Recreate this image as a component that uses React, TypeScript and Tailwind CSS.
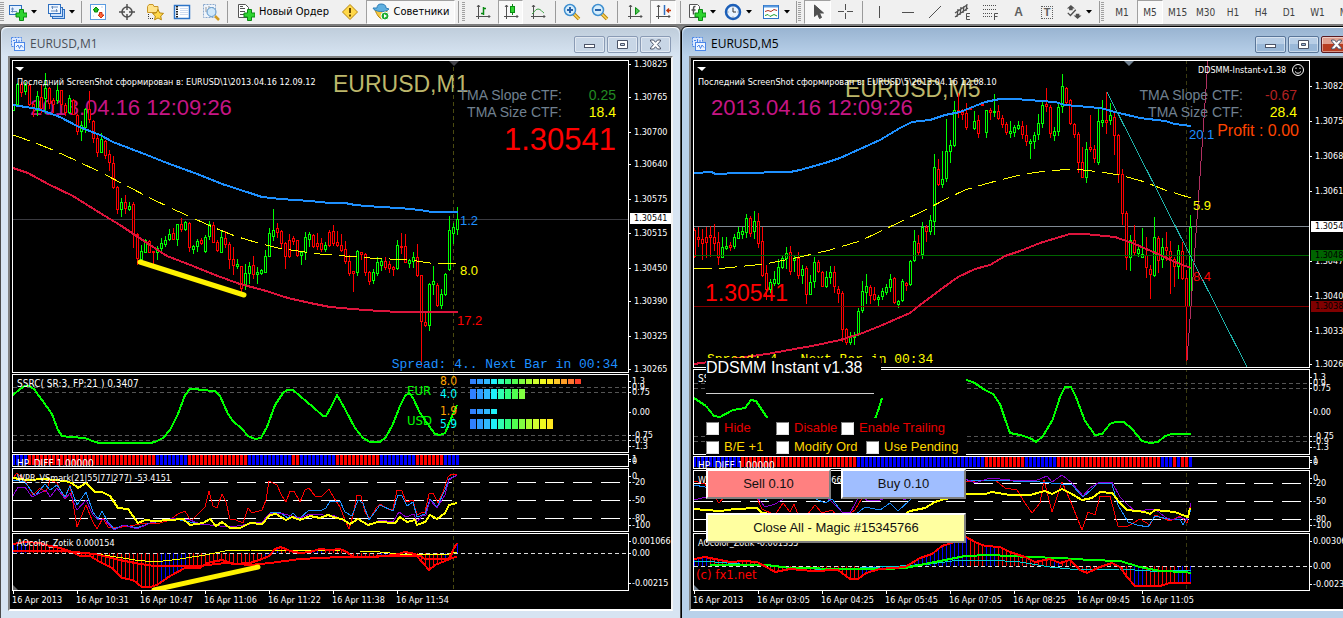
import type { ReactNode } from 'react';
import clsx from 'clsx';

type Candle = [high: number, top: number, bottom: number, low: number, up: 0 | 1];
type Point = [number, number];
type Run = [color: string, count: number];
type AxisLabel = { y: number; text: string; box?: string; fill?: string };

const UI_FONT = "[font-family:'DejaVu_Sans_Condensed','DejaVu_Sans',sans-serif]";
const TITLE_FONT = "[font-family:'Open_Sans','Noto_Sans',sans-serif]";
const ARIAL = "[font-family:'Liberation_Sans',Arial,sans-serif]";
const MONO = "[font-family:'Liberation_Mono','Courier_New',monospace]";

const LIME = '#00ff00';
const RED = '#ff0000';
const BLUE = '#0000ff';
const DODGER = '#1e90ff';
const CRIMSON = '#dc143c';
const YELLOW = '#ffff00';
const PURPLE = '#8a00d0';

/* ---------- Market data ---------- */

const M1_CANDLES: Candle[] = [
  [104, 104, 110, 110, 1], [83, 84, 104, 104, 1], [82, 84, 92, 96, 0], [82, 85, 91, 94, 1], [83, 85, 104, 105, 0],
  [103, 104, 108, 116, 0], [91, 96, 110, 115, 1], [85, 97, 108, 112, 0], [73, 88, 98, 113, 1], [87, 88, 103, 108, 0],
  [98, 100, 104, 112, 0], [84, 90, 100, 103, 1], [90, 90, 104, 105, 0], [103, 105, 112, 115, 0], [95, 98, 112, 113, 1],
  [99, 100, 114, 114, 0], [114, 115, 131, 134, 0], [121, 125, 131, 140, 1], [108, 109, 127, 132, 1], [91, 109, 119, 122, 0],
  [120, 121, 138, 142, 0], [133, 138, 152, 156, 0], [133, 139, 152, 152, 1], [140, 141, 155, 158, 0], [150, 154, 162, 170, 0],
  [156, 163, 187, 188, 0], [186, 187, 209, 213, 0], [198, 202, 209, 216, 1], [195, 202, 208, 213, 0], [202, 206, 209, 210, 1],
  [202, 204, 233, 247, 0], [233, 234, 258, 264, 0], [245, 251, 259, 260, 1], [239, 240, 252, 252, 1], [240, 241, 252, 252, 0],
  [251, 251, 252, 264, 0], [246, 248, 252, 259, 1], [238, 243, 248, 250, 1], [236, 240, 244, 246, 1], [229, 234, 239, 240, 1],
  [228, 233, 239, 239, 0], [224, 224, 239, 245, 1], [218, 224, 229, 231, 0], [221, 222, 229, 230, 1], [222, 223, 247, 251, 0],
  [245, 246, 249, 253, 1], [239, 241, 246, 251, 1], [238, 240, 243, 244, 0], [235, 237, 251, 252, 1], [221, 224, 236, 239, 1],
  [222, 225, 242, 242, 0], [240, 242, 250, 251, 0], [231, 237, 252, 252, 1], [231, 238, 244, 247, 0], [242, 244, 259, 268, 0],
  [247, 259, 265, 274, 0], [259, 264, 266, 268, 1], [266, 266, 288, 295, 0], [264, 273, 285, 289, 1], [262, 266, 273, 283, 1],
  [256, 265, 274, 278, 0], [267, 272, 274, 283, 1], [269, 270, 273, 274, 1], [250, 256, 272, 272, 1], [228, 233, 256, 256, 1],
  [209, 230, 236, 240, 1], [223, 228, 232, 237, 0], [230, 231, 243, 247, 0], [242, 243, 256, 268, 0], [234, 240, 256, 257, 0],
  [236, 238, 241, 244, 0], [240, 240, 255, 256, 0], [251, 252, 255, 264, 1], [232, 237, 252, 259, 1], [232, 234, 239, 246, 1],
  [234, 235, 246, 247, 0], [233, 243, 246, 249, 0], [238, 243, 249, 251, 0], [242, 245, 249, 251, 1], [230, 232, 245, 246, 0],
  [225, 231, 243, 245, 0], [231, 242, 245, 246, 0], [234, 245, 250, 251, 0], [241, 249, 261, 263, 0], [255, 261, 273, 275, 0],
  [271, 271, 273, 291, 0], [250, 251, 272, 275, 1], [252, 252, 254, 259, 0], [253, 254, 272, 275, 0], [271, 272, 281, 284, 0],
  [269, 272, 280, 283, 1], [257, 262, 273, 275, 1], [259, 261, 265, 270, 1], [257, 261, 267, 269, 0], [261, 264, 268, 272, 0],
  [266, 267, 269, 275, 0], [240, 245, 268, 269, 1], [233, 246, 247, 253, 0], [234, 246, 262, 262, 0], [259, 260, 263, 267, 1],
  [252, 257, 261, 267, 1], [244, 257, 275, 276, 0], [275, 275, 321, 365, 0], [312, 322, 325, 326, 0], [283, 284, 325, 330, 1],
  [266, 281, 284, 294, 1], [283, 285, 305, 306, 0], [289, 294, 305, 308, 1], [273, 274, 294, 295, 1], [216, 230, 269, 270, 1],
  [223, 227, 233, 243, 1], [207, 219, 229, 234, 1],
];

const M5_CANDLES: Candle[] = [
  [228, 230, 256, 257, 0], [227, 237, 239, 246, 0], [229, 239, 243, 259, 0], [227, 237, 242, 257, 0], [226, 235, 237, 256, 0],
  [224, 237, 243, 250, 0], [232, 242, 257, 264, 0], [237, 247, 257, 257, 1], [237, 246, 248, 249, 1], [242, 245, 247, 250, 0],
  [234, 237, 246, 248, 1], [227, 232, 238, 238, 1], [227, 231, 234, 238, 1], [214, 218, 232, 237, 1], [216, 218, 233, 236, 0],
  [211, 221, 231, 238, 1], [213, 221, 243, 247, 0], [227, 241, 275, 276, 0], [265, 273, 289, 299, 0], [279, 282, 289, 292, 1],
  [271, 279, 283, 285, 1], [259, 267, 283, 284, 1], [256, 258, 267, 268, 1], [247, 253, 258, 268, 1], [246, 252, 271, 274, 0],
  [255, 258, 260, 271, 1], [252, 258, 275, 278, 0], [265, 269, 275, 283, 1], [266, 268, 294, 303, 0], [275, 282, 294, 294, 1],
  [257, 262, 281, 287, 1], [260, 262, 271, 272, 0], [271, 272, 286, 286, 0], [271, 277, 286, 287, 1], [266, 272, 277, 283, 1],
  [266, 272, 286, 292, 0], [286, 289, 293, 302, 0], [291, 293, 329, 341, 0], [328, 329, 342, 344, 0], [332, 337, 342, 344, 1],
  [332, 335, 337, 344, 1], [308, 311, 334, 335, 1], [281, 291, 310, 312, 1], [274, 286, 292, 303, 1], [285, 287, 295, 303, 0],
  [287, 294, 299, 300, 0], [295, 297, 299, 306, 1], [288, 291, 296, 299, 1], [284, 287, 292, 294, 1], [274, 279, 287, 291, 1],
  [277, 278, 302, 303, 0], [300, 301, 304, 307, 1], [279, 281, 300, 301, 1], [282, 283, 285, 290, 0], [260, 261, 284, 285, 1],
  [230, 241, 260, 261, 1], [235, 243, 252, 254, 0], [222, 227, 254, 258, 1], [225, 227, 231, 241, 0], [215, 220, 231, 234, 1],
  [154, 167, 221, 234, 1], [159, 169, 184, 185, 0], [151, 179, 184, 187, 1], [119, 151, 178, 181, 1], [140, 145, 151, 162, 1],
  [101, 110, 145, 146, 1], [93, 110, 112, 117, 0], [109, 112, 114, 119, 0], [103, 113, 127, 129, 0], [108, 108, 109, 109, 0],
  [111, 121, 128, 129, 1], [115, 120, 133, 137, 0], [104, 104, 105, 105, 0], [110, 110, 132, 137, 1], [108, 110, 112, 119, 0],
  [94, 111, 112, 116, 1], [105, 111, 118, 119, 0], [115, 118, 124, 127, 0], [122, 124, 132, 134, 0], [121, 131, 133, 137, 1],
  [125, 127, 132, 136, 1], [121, 125, 128, 129, 1], [121, 126, 134, 138, 0], [125, 135, 141, 145, 0], [139, 141, 143, 158, 1],
  [132, 135, 141, 148, 1], [114, 123, 134, 139, 1], [100, 105, 123, 127, 1], [88, 104, 106, 111, 0], [105, 107, 133, 137, 0],
  [127, 131, 135, 140, 1], [102, 107, 131, 135, 1], [74, 86, 106, 112, 1], [87, 88, 102, 103, 0], [99, 100, 123, 124, 0],
  [123, 124, 134, 137, 0], [132, 134, 162, 172, 0], [147, 162, 177, 177, 0], [142, 149, 177, 182, 1], [115, 147, 149, 151, 0],
  [145, 149, 158, 162, 0], [107, 121, 162, 164, 1], [100, 120, 122, 126, 1], [92, 120, 122, 133, 0], [103, 115, 120, 124, 1],
  [112, 117, 135, 154, 0], [134, 135, 174, 182, 0], [169, 174, 213, 224, 0], [211, 213, 257, 269, 0], [235, 240, 257, 270, 1],
  [225, 240, 252, 254, 0], [247, 249, 253, 256, 1], [228, 254, 257, 257, 1], [237, 255, 267, 277, 0], [265, 269, 274, 298, 0],
  [217, 237, 275, 276, 1], [236, 238, 260, 272, 0], [238, 247, 259, 267, 1], [232, 247, 250, 260, 0], [241, 251, 257, 293, 0],
  [257, 259, 266, 286, 0], [245, 250, 266, 278, 1], [242, 251, 278, 279, 0], [270, 278, 306, 360, 0], [215, 227, 306, 306, 1],
];

const M1_UPPER: Point[] = [[13, 105], [38, 109], [60, 117], [77, 126], [100, 135], [113, 142], [147, 155], [167, 163], [200, 175], [222, 184], [250, 193], [262, 197], [280, 199], [310, 201], [330, 203], [345, 203], [355, 205], [380, 207], [400, 208], [420, 210], [432, 212], [458, 212]];
const M1_MIDDLE: Point[] = [[13, 135], [33, 142], [53, 150], [77, 161], [100, 172], [127, 186], [150, 198], [173, 209], [195, 219], [215, 228], [235, 236], [258, 243], [278, 248], [298, 251], [320, 254], [345, 256], [370, 258], [390, 259], [410, 260], [430, 263], [458, 263]];
const M1_LOWER: Point[] = [[13, 168], [28, 173], [48, 184], [73, 196], [100, 213], [120, 225], [147, 243], [167, 256], [193, 266], [215, 275], [240, 284], [263, 290], [288, 298], [310, 303], [330, 307], [352, 309], [380, 311], [400, 312], [458, 312]];

const M5_UPPER: Point[] = [[694, 173], [712, 172], [715, 174], [740, 173], [790, 172], [800, 170], [825, 163], [840, 158], [860, 149], [880, 140], [900, 128], [912, 122], [930, 120], [945, 115], [960, 112], [970, 108], [985, 102], [1000, 99], [1015, 99], [1055, 102], [1065, 105], [1100, 108], [1115, 112], [1140, 118], [1165, 121], [1175, 124], [1191, 126]];
const M5_MIDDLE: Point[] = [[694, 269], [725, 268], [765, 264], [800, 257], [830, 250], [860, 241], [900, 222], [925, 210], [950, 197], [965, 190], [985, 184], [1000, 180], [1020, 175], [1045, 171], [1075, 169], [1100, 172], [1120, 175], [1145, 182], [1165, 190], [1191, 198]];
const M5_LOWER: Point[] = [[694, 364], [730, 359], [767, 354], [800, 348], [812, 346], [840, 340], [860, 334], [880, 326], [910, 313], [920, 305], [940, 290], [958, 277], [975, 269], [990, 265], [1005, 256], [1020, 251], [1040, 243], [1070, 234], [1085, 234], [1115, 237], [1135, 244], [1160, 255], [1175, 262], [1191, 268]];

const M1_SSRC: Point[] = [[13, 395], [20, 389], [25, 386], [29, 386], [34, 389], [42, 400], [52, 414], [58, 430], [62, 436], [70, 437], [85, 438], [95, 442], [100, 443], [150, 443], [155, 442], [163, 438], [170, 430], [178, 414], [185, 395], [190, 389], [197, 389], [200, 390], [215, 391], [220, 396], [228, 414], [233, 421], [242, 429], [248, 436], [255, 439], [261, 438], [267, 427], [275, 405], [283, 393], [287, 390], [293, 390], [300, 396], [313, 407], [323, 416], [326, 416], [331, 407], [337, 395], [345, 409], [355, 428], [363, 438], [370, 442], [380, 442], [386, 437], [393, 424], [400, 406], [405, 396], [409, 393], [413, 398], [420, 413], [427, 423], [435, 434], [440, 435], [445, 433], [450, 421], [457, 405]];
const M5_SSRC: Point[] = [[966, 380], [973, 382], [985, 390], [993, 394], [1000, 404], [1005, 419], [1010, 433], [1020, 435], [1030, 438], [1036, 442], [1043, 436], [1053, 419], [1060, 397], [1065, 387], [1071, 387], [1076, 397], [1085, 421], [1095, 435], [1102, 434], [1110, 424], [1115, 422], [1124, 422], [1132, 429], [1142, 441], [1150, 443], [1158, 442], [1165, 436], [1172, 434], [1191, 434]];

const M1_WPR_YELLOW: Point[] = [[13, 478], [20, 479], [28, 480], [45, 479], [65, 481], [72, 483], [78, 488], [86, 483], [95, 492], [102, 492], [110, 496], [118, 508], [128, 509], [138, 523], [145, 520], [155, 521], [170, 520], [183, 519], [190, 525], [203, 523], [210, 519], [216, 526], [222, 522], [230, 528], [240, 528], [250, 523], [262, 524], [270, 515], [276, 514], [286, 520], [292, 517], [300, 520], [310, 516], [320, 518], [328, 515], [336, 518], [342, 519], [350, 524], [358, 519], [368, 525], [378, 522], [395, 523], [400, 517], [407, 522], [415, 520], [417, 525], [425, 522], [430, 515], [437, 519], [445, 513], [449, 505], [457, 503]];
const M1_WPR_RED: Point[] = [[13, 478], [17, 473], [25, 480], [33, 495], [40, 488], [46, 492], [50, 480], [57, 483], [65, 499], [70, 485], [77, 527], [86, 505], [92, 520], [97, 529], [103, 518], [108, 527], [114, 528], [130, 526], [145, 523], [160, 523], [170, 520], [178, 514], [185, 511], [191, 521], [200, 512], [205, 507], [209, 491], [213, 506], [217, 508], [222, 494], [226, 502], [230, 519], [236, 520], [243, 523], [248, 508], [252, 513], [262, 510], [266, 500], [269, 481], [277, 485], [282, 496], [286, 502], [290, 491], [294, 491], [300, 502], [305, 490], [309, 488], [315, 496], [322, 496], [329, 489], [334, 498], [340, 507], [345, 520], [349, 529], [353, 515], [357, 495], [361, 496], [365, 512], [370, 519], [376, 508], [380, 504], [388, 509], [393, 509], [397, 490], [402, 491], [406, 502], [413, 500], [417, 515], [421, 513], [425, 512], [429, 494], [433, 493], [438, 503], [443, 492], [448, 477], [452, 474], [457, 474]];
const M1_WPR_BLUE: Point[] = [[13, 480], [25, 482], [35, 496], [45, 484], [50, 490], [57, 485], [65, 497], [70, 486], [77, 505], [86, 492], [93, 512], [98, 519], [102, 511], [108, 522], [114, 529], [124, 525], [137, 528], [150, 523], [175, 519], [200, 524], [230, 527], [250, 524], [262, 523], [270, 513], [279, 512], [288, 518], [293, 513], [299, 519], [309, 510], [320, 511], [326, 508], [330, 501], [340, 501], [345, 512], [352, 516], [358, 500], [363, 503], [369, 520], [380, 505], [393, 511], [398, 495], [402, 496], [407, 506], [413, 502], [417, 517], [425, 514], [430, 499], [437, 507], [445, 490], [449, 479], [457, 475]];
const M1_WPR_PURPLE: Point[] = [[13, 496], [18, 487], [25, 487], [32, 497], [40, 493], [46, 490], [50, 497], [57, 488], [65, 499], [70, 493], [77, 510], [86, 500], [93, 515], [98, 520], [104, 519], [114, 530], [124, 525], [137, 529], [150, 523], [175, 518], [190, 520], [200, 524], [230, 527], [250, 524], [262, 522], [270, 513], [280, 513], [300, 518], [310, 514], [335, 516], [350, 524], [358, 519], [370, 525], [380, 520], [393, 522], [399, 512], [406, 517], [414, 514], [417, 522], [422, 516], [426, 515], [430, 500], [437, 508], [445, 495], [449, 480], [457, 475]];

const M5_WPR_YELLOW: Point[] = [[694, 509], [705, 510], [720, 511], [735, 509], [757, 508], [762, 513], [830, 520], [905, 514], [910, 511], [925, 508], [935, 502], [945, 499], [955, 497], [966, 494], [985, 494], [992, 492], [1010, 495], [1030, 495], [1045, 491], [1052, 494], [1062, 489], [1070, 493], [1082, 500], [1092, 498], [1100, 492], [1112, 493], [1120, 503], [1127, 510], [1145, 512], [1150, 514], [1155, 510], [1175, 512], [1185, 516], [1188, 517], [1190, 508]];
const M5_WPR_PURPLE: Point[] = [[694, 500], [706, 497], [720, 490], [735, 492], [757, 497], [765, 507], [775, 504], [790, 495], [800, 499], [815, 493], [830, 500], [842, 512], [850, 513], [860, 495], [868, 501], [880, 500], [895, 494], [905, 500], [912, 485], [925, 478], [966, 479], [975, 483], [990, 478], [1010, 480], [1035, 481], [1047, 476], [1052, 482], [1062, 475], [1072, 483], [1083, 496], [1090, 488], [1098, 483], [1112, 482], [1120, 497], [1128, 505], [1135, 511], [1155, 509], [1165, 517], [1172, 520], [1180, 517], [1187, 520], [1191, 503]];
const M5_WPR_RED: Point[] = [[694, 481], [705, 484], [719, 503], [730, 490], [757, 498], [762, 509], [775, 515], [783, 503], [790, 512], [794, 504], [800, 520], [807, 515], [815, 505], [822, 513], [832, 510], [840, 520], [855, 510], [862, 498], [880, 495], [905, 490], [930, 480], [966, 482], [985, 480], [995, 480], [1005, 488], [1017, 490], [1025, 503], [1032, 513], [1040, 503], [1044, 480], [1052, 512], [1062, 482], [1070, 500], [1082, 530], [1088, 512], [1095, 515], [1100, 496], [1110, 496], [1118, 526], [1128, 526], [1140, 519], [1150, 525], [1155, 515], [1170, 521], [1180, 516], [1187, 523], [1191, 503]];
const M5_WPR_BLUE: Point[] = [[694, 485], [705, 487], [760, 490], [766, 500], [780, 488], [800, 492], [825, 503], [832, 499], [842, 512], [855, 515], [865, 507], [880, 510], [890, 503], [898, 511], [910, 500], [930, 483], [985, 480], [1040, 482], [1072, 485], [1083, 497], [1092, 489], [1098, 483], [1112, 484], [1118, 505], [1128, 522], [1137, 525], [1148, 527], [1155, 516], [1172, 520], [1180, 519], [1183, 525], [1191, 510]];

const M1_AO: Point[] = [[13, 544], [25, 542], [40, 543], [50, 546], [60, 548], [70, 551], [80, 556], [90, 556], [100, 562], [112, 568], [122, 578], [133, 580], [142, 587], [150, 587], [157, 585], [170, 576], [185, 568], [200, 568], [207, 563], [222, 560], [235, 564], [250, 563], [262, 559], [269, 556], [275, 549], [281, 547], [290, 551], [300, 553], [310, 552], [320, 549], [330, 550], [340, 549], [347, 552], [353, 557], [370, 557], [395, 555], [405, 552], [415, 554], [423, 563], [429, 570], [435, 565], [450, 559], [453, 550], [457, 543]];
const M1_AO_SLOW: Point[] = [[13, 551], [45, 551], [60, 551], [75, 552], [95, 554], [115, 559], [140, 564], [155, 566], [200, 566], [225, 563], [250, 565], [270, 563], [300, 559], [340, 557], [420, 556], [425, 559], [445, 559], [457, 557]];
const M1_AO_YELLOW: Point[] = [[13, 550], [60, 551], [90, 553], [110, 556], [135, 560], [155, 562], [180, 559], [205, 555], [225, 551], [250, 550], [340, 551], [360, 551], [380, 552], [400, 554], [425, 554], [445, 555], [457, 552]];
const M5_AO: Point[] = [[694, 559], [705, 557], [715, 559], [730, 562], [745, 561], [757, 562], [768, 568], [775, 572], [790, 569], [812, 571], [838, 570], [850, 579], [858, 579], [866, 573], [880, 569], [905, 567], [912, 563], [920, 558], [932, 554], [942, 546], [952, 543], [966, 537], [975, 542], [985, 546], [1000, 547], [1010, 552], [1025, 557], [1035, 562], [1050, 559], [1060, 563], [1070, 560], [1080, 570], [1087, 573], [1100, 567], [1112, 563], [1120, 567], [1127, 577], [1135, 586], [1160, 586], [1170, 583], [1191, 583]];
const M5_AO_GREEN: Point[] = [[710, 565], [767, 565], [790, 568], [850, 569], [885, 569], [905, 568], [925, 564], [945, 560], [965, 556], [990, 555], [1030, 557], [1060, 558], [1090, 560], [1120, 561], [1140, 567], [1160, 571], [1185, 572], [1191, 573]];
const M5_AO_CYAN: Point[] = [[694, 561], [715, 562], [740, 564], [770, 566], [830, 570], [860, 568], [900, 566], [930, 564], [960, 560], [990, 560], [1020, 562], [1050, 567], [1080, 570], [1120, 569], [1150, 571], [1170, 571], [1191, 570]];

const M1_RUNS: Run[] = [[BLUE, 4], [RED, 32], [BLUE, 8], [RED, 15], [BLUE, 11], [RED, 2], [BLUE, 9], [RED, 11], [BLUE, 9], [RED, 7], [BLUE, 4]];
const M5_RUNS: Run[] = [[BLUE, 12], [RED, 29], [BLUE, 32], [RED, 10], [BLUE, 8], [RED, 26], [BLUE, 3], [RED, 1], [BLUE, 1], [RED, 2], [BLUE, 1]];
const M1_AO_RUNS: Run[] = [[BLUE, 4], [RED, 33], [BLUE, 7], [RED, 19], [BLUE, 4], [RED, 6], [BLUE, 5], [RED, 14], [BLUE, 4], [RED, 10], [RED, 2], [BLUE, 1], [RED, 2], [BLUE, 1]];
const M5_AO_RUNS: Run[] = [[BLUE, 4], [RED, 4], [BLUE, 4], [RED, 30], [BLUE, 27], [RED, 4], [BLUE, 3], [RED, 14], [BLUE, 2], [RED, 18], [BLUE, 3], [RED, 8], [BLUE, 2], [RED, 1], [BLUE, 1]];

const STRENGTH_COLORS = ['#3080ff', '#309cff', '#30b8ff', '#20f0f8', '#30ffb0', '#30ff80', '#50ff50', '#80ff40', '#a8ff30', '#d0ff30', '#f0f820', '#ffe820', '#ffc828', '#ffa028', '#ff7830', '#ff4028'];

const M1_TIMES = ['16 Apr 2013', '16 Apr 10:31', '16 Apr 10:47', '16 Apr 11:06', '16 Apr 11:22', '16 Apr 11:38', '16 Apr 11:54'];
const M5_TIMES = ['16 Apr 2013', '16 Apr 03:05', '16 Apr 04:25', '16 Apr 05:45', '16 Apr 07:05', '16 Apr 08:25', '16 Apr 09:45', '16 Apr 11:05'];

/* ---------- Chart primitives ---------- */

function valueAt(points: Point[], x: number) {
  const next = points.findIndex(([px]) => px >= x);
  if (next === -1) return points[points.length - 1][1];
  if (next === 0) return points[0][1];
  const [x0, y0] = points[next - 1];
  const [x1, y1] = points[next];
  return Math.round(y0 + ((y1 - y0) * (x - x0)) / (x1 - x0));
}

function Line({ points, color, width = 1, dash }: { points: Point[]; color: string; width?: number; dash?: string }) {
  return (
    <polyline
      points={points.map((p) => p.join(',')).join(' ')}
      fill="none"
      stroke={color}
      strokeWidth={width}
      strokeDasharray={dash}
      strokeLinejoin="round"
      shapeRendering="crispEdges"
    />
  );
}

function Level({ y, from, to, color, dash }: { y: number; from: number; to: number; color: string; dash?: string }) {
  return <path d={`M${from} ${y + 0.5}H${to}`} stroke={color} strokeDasharray={dash} shapeRendering="crispEdges" />;
}

function Cursor({ x, color = '#4a4a10' }: { x: number; color?: string }) {
  return <path d={`M${x + 0.5} 60V592`} stroke={color} strokeDasharray="4 3" shapeRendering="crispEdges" />;
}

function Candles({ data, x0 }: { data: Candle[]; x0: number }) {
  return (
    <g shapeRendering="crispEdges">
      {data.map(([high, top, bottom, low, up], i) => {
        const x = x0 + i * 4;
        const color = up ? LIME : RED;
        return (
          <g key={i}>
            <rect x={x} y={high} width={1} height={low - high + 1} fill={color} />
            <rect x={x - 1} y={top} width={3} height={bottom - top + 1} fill={color} />
            {bottom - top > 1 && <rect x={x} y={top + 1} width={1} height={bottom - top - 1} fill="#000" />}
          </g>
        );
      })}
    </g>
  );
}

function expand(runs: Run[]) {
  return runs.flatMap(([color, count]) => Array<string>(count).fill(color));
}

function TrendBars({ runs, x0, y }: { runs: Run[]; x0: number; y: number }) {
  return (
    <g shapeRendering="crispEdges">
      {expand(runs).map((color, i) => (
        <rect key={i} x={x0 + i * 4} y={y} width={3} height={10} fill={color} />
      ))}
    </g>
  );
}

function Histogram({ runs, points, x0, base }: { runs: Run[]; points: Point[]; x0: number; base: number }) {
  return (
    <g shapeRendering="crispEdges">
      {expand(runs).map((color, i) => {
        const x = x0 + i * 4;
        const y = valueAt(points, x);
        return <rect key={i} x={x} y={Math.min(y, base)} width={1} height={Math.abs(y - base)} fill={color} />;
      })}
    </g>
  );
}

function Caption({ x, y, small, children }: { x: number; y: number; small?: boolean; children: ReactNode }) {
  return (
    <text x={x} y={y} fill="#fff" className={clsx(UI_FONT, small ? 'text-[9px]' : 'text-[10px]')}>
      {children}
    </text>
  );
}

function StrengthRow({ y, height, count }: { y: number; height: number; count: number }) {
  return (
    <g>
      {STRENGTH_COLORS.slice(0, count).map((color, i) => (
        <rect key={color} x={470 + i * 7} y={y} width={6} height={height} fill={color} />
      ))}
    </g>
  );
}

interface PaneProps {
  x: number;
  y: number;
  className: string;
  labels: AxisLabel[];
  labelOffset?: number;
  children: ReactNode;
}

// One sub-window of a chart: the plot on the left, its value scale on the right.
function Pane({ x, y, className, labels, labelOffset = 3, children }: PaneProps) {
  return (
    <div className={clsx('flex shrink-0', className)}>
      <svg className="h-full min-w-0 flex-1 border border-white">
        <g transform={`translate(${-x - 1} ${-y - 1})`}>{children}</g>
      </svg>
      <svg className="h-full w-[42px] shrink-0 overflow-visible">
        <g transform={`translate(0 ${-y})`}>
          {labels.map(({ y: ly, text, box, fill = '#fff' }) => (
            <g key={text + ly}>
              {box ? <rect x={1} y={ly - 5} width={41} height={11} fill={box} /> : <rect x={0} y={ly} width={2} height={1} fill="#fff" />}
              <text x={labelOffset} y={ly + 3} fill={fill} className={clsx(UI_FONT, 'text-[9px]')}>
                {text}
              </text>
            </g>
          ))}
        </g>
      </svg>
    </div>
  );
}

function TimeAxis({ labels }: { labels: string[] }) {
  return (
    <div className={clsx('flex h-[18px] text-[9px] leading-[13px] text-white', UI_FONT)}>
      {labels.map((label) => (
        <div key={label} className="w-16 shrink-0 whitespace-nowrap">
          <div className="ml-px h-[3px] w-px bg-white" />
          {label}
        </div>
      ))}
    </div>
  );
}

/* ---------- Window frame ---------- */

function ChartIcon() {
  return (
    <svg width="16" height="16" viewBox="0 0 16 16" fill="none" stroke="#4a86e8">
      <rect x="1.5" y="1.5" width="10" height="9" fill="#dce9ff" strokeDasharray="2 1" />
      <path d="M3 4.5h2M6.5 3v4M9 4v3" />
      <rect x="4.5" y="6.500" width="10" height="8" fill="#eef5ff" />
      <path d="M6 11l2-2 1.500 3.500 1.500-3.500 2 2.500" />
    </svg>
  );
}

function FrameButton({ label, active, danger, children }: { label: string; active?: boolean; danger?: boolean; children: ReactNode }) {
  return (
    <button
      aria-label={label}
      className={clsx(
        'flex h-[17px] w-[31px] items-center justify-center rounded-[2px] border shadow-[inset_0_0_0_1px_rgba(255,255,255,0.45)]',
        danger && 'border-[#5a1a20] bg-linear-to-b from-[#e0a090] from-50% to-[#b83c20] to-50%',
        !danger && active && 'border-[#5a7699] bg-linear-to-b from-[#b8cee6] from-50% to-[#9ab8d8] to-50%',
        !danger && !active && 'border-[#8a9bb5] bg-[#c8d6e6]'
      )}
    >
      <svg width="13" height="11" viewBox="0 0 13 11" fill="#fff" stroke="#4c5468">
        {children}
      </svg>
    </button>
  );
}

function ChartWindow({ title, active, children }: { title: string; active?: boolean; children: ReactNode }) {
  return (
    <section
      className={clsx(
        'flex shrink-0 grow basis-[681px] flex-col rounded-t-md border px-[7px] pb-[7px] shadow-[inset_0_1px_0_#fff]',
        active ? 'border-black bg-[#b9d1ea]' : 'border-[#4a4a4a] bg-[#d7e4f2]'
      )}
    >
      <header
        className={clsx(
          '-mx-[6px] mt-px flex h-7 items-center justify-between rounded-t-md pl-2 pr-2 pt-1 bg-linear-to-b',
          active ? 'from-[#99b4d1] to-[#b9d1ea]' : 'from-[#bfcddb] to-[#d7e4f2]'
        )}
      >
        <h1 className={clsx('flex items-center gap-1 text-xs', TITLE_FONT, active ? 'text-black' : 'text-[#4a4f58]')}>
          <ChartIcon />
          {title}
        </h1>
        <div className="flex gap-[2px]">
          <FrameButton label={`Minimize ${title}`} active={active}>
            <rect x="1.5" y="5.5" width="10" height="3" />
          </FrameButton>
          <FrameButton label={`Maximize ${title}`} active={active}>
            <path fillRule="evenodd" d="M1.500 1.500h10v8h-10zM4.500 4.500v2h4v-2z" />
          </FrameButton>
          <FrameButton label={`Close ${title}`} active={active} danger={active}>
            <path d="M1.500 1h3L6.500 3.300 8.500 1h3v1L8.400 5.500l3.100 3.500v1h-3l-2-2.300L4.500 10h-3V9l3.100-3.500L1.500 2z" />
          </FrameButton>
        </div>
      </header>
      <div className="relative flex flex-1 flex-col border-2 border-b-white border-l-[#808080] border-r-[#f4f4f4] border-t-[#808080] bg-black pl-[2px] pt-[2px]">
        {children}
      </div>
    </section>
  );
}

/* ---------- EURUSD,M1 ---------- */

function ChartM1() {
  const price = (y: number, text: string): AxisLabel => ({ y, text });

  return (
    <ChartWindow title="EURUSD,M1">
      <div className="flex flex-col gap-px">
        <Pane
          x={12}
          y={60}
          className="h-[313px]"
          labelOffset={5}
          labels={[
            price(64, '1.30825'), price(97, '1.30765'), price(132, '1.30700'), price(164, '1.30640'), price(199, '1.30575'),
            price(233, '1.30515'), price(268, '1.30450'), price(301, '1.30390'), price(336, '1.30325'), price(369, '1.30265'),
            { y: 218, text: '1.30541', box: '#fff', fill: '#000' },
          ]}
        >
          <text x={30} y={115} fill="#c71585" className={clsx(ARIAL, 'text-[22px]')}>2013.04.16 12:09:26</text>
          <text x={333} y={92} fill="#bdb76b" className={clsx(ARIAL, 'text-[23px]')}>EURUSD,M1</text>
          <Cursor x={453} />
          <Level y={219} from={13} to={628} color="#3a3a40" />
          <Candles data={M1_CANDLES} x0={13} />
          <Line points={M1_UPPER} color={DODGER} width={2} />
          <Line points={M1_MIDDLE} color={YELLOW} dash="18 7" />
          <Line points={M1_LOWER} color={CRIMSON} width={2} />
          <path d="M140 262L244 295" stroke="#fff200" strokeWidth={5} strokeLinecap="round" />
          <path d="M15 67h9l-4 4z" fill="#fff" />
          <path d="M449 61h10l-5 5z" fill="#44444a" />
          <Caption x={17} y={85} small>{'Последний ScreenShot сформирован в: EURUSD\\1\\2013.04.16 12.09.12'}</Caption>
          <g className={clsx(ARIAL, 'text-[14px]')}>
            <text x={562} y={100} fill="#708090" textAnchor="end">TMA Slope CTF:</text>
            <text x={562} y={117} fill="#708090" textAnchor="end">TMA Size CTF:</text>
            <text x={616} y={100} fill="#228b22" textAnchor="end">0.25</text>
            <text x={616} y={117} fill={YELLOW} textAnchor="end">18.4</text>
            <text x={460} y={225} fill={DODGER} className="text-[13px]">1.2</text>
            <text x={460} y={275} fill={YELLOW} className="text-[13px]">8.0</text>
            <text x={457} y={325} fill={RED} className="text-[13px]">17.2</text>
          </g>
          <text x={616} y={150} fill={RED} textAnchor="end" className={clsx(ARIAL, 'text-[31px]')}>1.30541</text>
          <text x={618} y={368} fill={DODGER} textAnchor="end" className={clsx(MONO, 'text-[13px]')}>Spread: 4.. Next Bar in 00:34</text>
        </Pane>

        <Pane
          x={12}
          y={374}
          className="h-[79px]"
          labels={[
            { y: 381, text: '1.3' }, { y: 387, text: '0.9' }, { y: 392, text: '0.75' }, { y: 412, text: '0.00' },
            { y: 435, text: '-0.75' }, { y: 440, text: '-0.9' }, { y: 446, text: '-1.3' },
          ]}
        >
          <Cursor x={453} />
          {[387, 392, 435, 440].map((y) => (
            <Level key={y} y={y} from={13} to={628} color="#555" dash="4 3" />
          ))}
          <Line points={M1_SSRC} color={LIME} width={2} />
          <Caption x={17} y={387}>SSRC( SR:3, FP:21 ) 0.3407</Caption>
          <g className={clsx(UI_FONT, 'text-[13px]')}>
            <text x={407} y={395} fill={LIME}>EUR</text>
            <text x={407} y={425} fill={LIME}>USD</text>
          </g>
          <g className={clsx(UI_FONT, 'text-[12px]')}>
            <text x={440} y={385} fill="#ffa500">8.0</text>
            <text x={440} y={398} fill="#00ffff">4.0</text>
            <text x={440} y={415} fill="#ffa500">1.9</text>
            <text x={440} y={428} fill="#00ffff">5.9</text>
          </g>
          <StrengthRow y={379} height={5} count={16} />
          <StrengthRow y={389} height={10} count={8} />
          <StrengthRow y={409} height={5} count={4} />
          <StrengthRow y={419} height={10} count={12} />
        </Pane>

        <Pane x={12} y={454} className="h-[13px]" labels={[{ y: 459, text: '1' }, { y: 461, text: '0' }]}>
          <TrendBars runs={M1_RUNS} x0={12} y={455} />
          <Caption x={17} y={467}>HP_DIFF 1.00000</Caption>
        </Pane>

        <Pane
          x={12}
          y={468}
          className="h-16"
          labels={[{ y: 476, text: '0' }, { y: 482, text: '-20' }, { y: 500, text: '-50' }, { y: 518, text: '-80' }, { y: 525, text: '-100' }]}
        >
          <Cursor x={453} />
          {[482, 500, 518].map((y) => (
            <Level key={y} y={y} from={13} to={628} color="#fff" dash="19 9" />
          ))}
          <Line points={M1_WPR_RED} color={RED} />
          <Line points={M1_WPR_BLUE} color={DODGER} />
          <Line points={M1_WPR_PURPLE} color={PURPLE} />
          <Line points={M1_WPR_YELLOW} color={YELLOW} width={2} />
          <Caption x={17} y={481} small>WPR_VSmark(21|55|77|277) -53.4151</Caption>
        </Pane>

        <Pane
          x={12}
          y={533}
          className="h-[58px]"
          labels={[{ y: 541, text: '0.001066' }, { y: 553, text: '0.00' }, { y: 583, text: '-0.00215' }]}
        >
          <Cursor x={453} />
          <Histogram runs={M1_AO_RUNS} points={M1_AO} x0={13} base={553} />
          <Level y={553} from={13} to={628} color="#ddd" dash="4 3" />
          <Line points={M1_AO_YELLOW} color={YELLOW} />
          <Line points={M1_AO_SLOW} color={RED} width={2} />
          <Line points={M1_AO} color={RED} width={2} />
          <path d="M154 590L258 567" stroke="#fff200" strokeWidth={5} strokeLinecap="round" />
          <path d="M13 585v5h5z" fill="#666" />
          <Caption x={17} y={546} small>AOcolor_Zotik 0.000154</Caption>
        </Pane>
      </div>
      <TimeAxis labels={M1_TIMES} />
    </ChartWindow>
  );
}

/* ---------- EURUSD,M5 ---------- */

function TradeOption({ label, className }: { label: string; className?: string }) {
  return (
    <label className={clsx('flex items-center gap-[5px] whitespace-nowrap', className)}>
      <input
        type="checkbox"
        className="size-[13px] shrink-0 appearance-none border border-b-[#e0e0e0] border-l-[#808080] border-r-[#e0e0e0] border-t-[#808080] bg-white"
      />
      {label}
    </label>
  );
}

const TRADE_BUTTON =
  'border-2 border-b-[#808080] border-l-white border-r-[#808080] border-t-white h-[30px] text-[#111] text-center';

function TradePanel() {
  return (
    <div className={clsx('absolute left-[15px] top-[300px] w-[260px] text-[13px]', ARIAL)}>
      <div className="h-9 w-[175px] bg-black">
        <h2 className="h-[35px] text-base leading-5 text-white">DDSMM Instant v1.38</h2>
        <div className="h-px w-[168px] bg-[#d0d0d0]" />
      </div>
      <svg className="block h-6 w-full bg-black">
        <g transform="translate(-706 -394)">
          <Line points={[[706, 406], [714, 416], [720, 417], [733, 410], [745, 408], [751, 400], [756, 401], [762, 410], [768, 419]]} color={LIME} width={2} />
          <Line points={[[875, 419], [879, 408], [882, 398]]} color={LIME} width={2} />
        </g>
      </svg>
      <div className="flex h-5 bg-black text-[#e60000]">
        <TradeOption label="Hide" className="w-[70px]" />
        <TradeOption label="Disable" className="w-[65px]" />
        <TradeOption label="Enable Trailing" />
      </div>
      <div className="flex h-[18px] bg-black text-[#ffd700]">
        <TradeOption label="B/E +1" className="w-[70px]" />
        <TradeOption label="Modify Ord" className="w-[90px]" />
        <TradeOption label="Use Pending" />
      </div>
      <div className="mt-[13px] flex flex-col gap-[14px]">
        <div className="flex gap-[10px]">
          <button className={clsx(TRADE_BUTTON, 'flex-1 bg-[#ff8080]')}>Sell 0.10</button>
          <button className={clsx(TRADE_BUTTON, 'flex-1 bg-[#a0beff]')}>Buy 0.10</button>
        </div>
        <button className={clsx(TRADE_BUTTON, 'bg-[#ffffa0]')}>Close All - Magic #15345766</button>
      </div>
    </div>
  );
}

function ChartM5() {
  return (
    <ChartWindow title="EURUSD,M5" active>
      <div className="flex flex-col gap-px">
        <Pane
          x={693}
          y={60}
          className="h-[308px]"
          labelOffset={5}
          labels={[
            { y: 86, text: '1.30825' }, { y: 121, text: '1.30755' }, { y: 156, text: '1.30685' }, { y: 191, text: '1.30615' },
            { y: 261, text: '1.30475' }, { y: 296, text: '1.30405' }, { y: 331, text: '1.30335' }, { y: 364, text: '1.30265' },
            { y: 226, text: '1.30541', box: '#fff', fill: '#000' },
            { y: 255, text: '1.30485', box: '#006400', fill: '#000' },
            { y: 306, text: '1.30385', box: '#800000', fill: '#000' },
          ]}
        >
          <text x={711} y={115} fill="#c71585" className={clsx(ARIAL, 'text-[22px]')}>2013.04.16 12:09:26</text>
          <text x={845} y={97} fill="#bdb76b" className={clsx(ARIAL, 'text-[23px]')}>EURUSD,M5</text>
          <text x={705} y={301} fill={RED} className={clsx(ARIAL, 'text-[23px]')}>1.30541</text>
          <Cursor x={1186} color="#3a3a10" />
          <Level y={226} from={694} to={1330} color="#808a94" />
          <Candles data={M5_CANDLES} x0={694} />
          <Level y={255} from={694} to={1330} color="#006400" />
          <Level y={306} from={694} to={1330} color="#800000" />
          <Line points={M5_UPPER} color={DODGER} width={2} />
          <Line points={M5_MIDDLE} color={YELLOW} dash="18 7" />
          <Line points={M5_LOWER} color={CRIMSON} width={2} />
          <Line points={[[1107, 92], [1247, 367]]} color="#20b2aa" />
          <Line points={[[1187, 360], [1191, 306], [1208, 60]]} color="#b03060" />
          <path d="M697 67h9l-4 4z" fill="#fff" />
          <path d="M1124 61h10l-5 5z" fill="#708090" />
          <Caption x={698} y={85} small>{'Последний ScreenShot сформирован в: EURUSD\\5\\2013.04.16 12.08.10'}</Caption>
          <Caption x={1198} y={73} small>DDSMM-Instant-v1.38</Caption>
          <g fill="none" stroke="#fff">
            <circle cx={1298} cy={70} r={5.5} />
            <path d="M1295 71.500q3 3.500 6 0M1296 67.500v1.500M1300 67.500v1.500" />
          </g>
          <g className={clsx(ARIAL, 'text-[14px]')}>
            <text x={1243} y={100} fill="#708090" textAnchor="end">TMA Slope CTF:</text>
            <text x={1243} y={117} fill="#708090" textAnchor="end">TMA Size CTF:</text>
            <text x={1297} y={100} fill="#b22222" textAnchor="end">-0.67</text>
            <text x={1297} y={117} fill={YELLOW} textAnchor="end">28.4</text>
            <text x={1189} y={139} fill={DODGER} className="text-[13px]">20.1</text>
            <text x={1193} y={210} fill={YELLOW} className="text-[13px]">5.9</text>
            <text x={1193} y={281} fill={RED} className="text-[13px]">8.4</text>
          </g>
          <text x={1299} y={136} fill="#ff4500" textAnchor="end" className={clsx(ARIAL, 'text-[16px]')}>Profit : 0.00</text>
          <text x={707} y={363} fill={YELLOW} className={clsx(MONO, 'text-[13px]')}>Spread: 4.. Next Bar in 00:34</text>
        </Pane>

        <Pane
          x={693}
          y={369}
          className="h-[86px]"
          labels={[
            { y: 377, text: '1.3' }, { y: 383, text: '0.9' }, { y: 388, text: '0.75' }, { y: 412, text: '0.00' },
            { y: 436, text: '-0.75' }, { y: 441, text: '-0.9' }, { y: 447, text: '-1.3' },
          ]}
        >
          <Cursor x={1186} color="#3a3a10" />
          {[383, 388, 436, 441].map((y) => (
            <Level key={y} y={y} from={694} to={1330} color="#555" dash="4 3" />
          ))}
          <Caption x={698} y={382}>SSRC( SR:3, FP:21 )</Caption>
          <Line points={[[694, 398], [700, 402], [706, 406]]} color={LIME} width={2} />
          <rect x={706} y={370} width={260} height={85} fill="#000" />
          <Line points={M5_SSRC} color={LIME} width={2} />
        </Pane>

        <Pane x={693} y={456} className="h-[13px]" labels={[{ y: 460, text: '1' }, { y: 462, text: '0' }]}>
          <TrendBars runs={M5_RUNS} x0={693} y={457} />
          <Caption x={698} y={469}>HP_DIFF 1.00000</Caption>
        </Pane>

        <Pane
          x={693}
          y={470}
          className="h-[62px]"
          labels={[{ y: 478, text: '0' }, { y: 483, text: '-20' }, { y: 501, text: '-50' }, { y: 519, text: '-80' }, { y: 525, text: '-100' }]}
        >
          <Cursor x={1186} color="#3a3a10" />
          {[483, 501, 519].map((y) => (
            <Level key={y} y={y} from={694} to={1330} color="#fff" dash="19 9" />
          ))}
          <Line points={M5_WPR_RED} color={RED} />
          <Line points={M5_WPR_BLUE} color={DODGER} />
          <Line points={M5_WPR_PURPLE} color={PURPLE} />
          <Line points={M5_WPR_YELLOW} color={YELLOW} width={2} />
          <Caption x={698} y={483} small>WPR_VSmark(21|55|77|277) -81.6667</Caption>
        </Pane>

        <Pane
          x={693}
          y={533}
          className="h-[58px]"
          labels={[{ y: 541, text: '0.003064' }, { y: 566, text: '0.00' }, { y: 584, text: '-0.00235' }]}
        >
          <Cursor x={1186} color="#3a3a10" />
          <Histogram runs={M5_AO_RUNS} points={M5_AO} x0={694} base={566} />
          <Level y={566} from={694} to={1330} color="#ddd" dash="4 3" />
          <Line points={M5_AO_CYAN} color="#00ced1" />
          <Line points={M5_AO_GREEN} color={LIME} width={2} />
          <Line points={M5_AO} color={RED} width={2} />
          <path d="M694 585v5h5z" fill="#708090" />
          <Caption x={698} y={546} small>AOcolor_Zotik -0.001355</Caption>
          <text x={696} y={579} fill={RED} className={clsx(UI_FONT, 'text-[13px]')}>(c) fx1.net</text>
        </Pane>
      </div>
      <TimeAxis labels={M5_TIMES} />
      <TradePanel />
    </ChartWindow>
  );
}

/* ---------- Toolbar ---------- */

function Icon({ children, size = 18 }: { children: ReactNode; size?: number }) {
  return (
    <svg width={size} height={size} viewBox="0 0 18 18" fill="none" stroke="#505050" className="shrink-0">
      {children}
    </svg>
  );
}

interface ToolProps {
  label: string;
  width: string;
  pressed?: boolean;
  menu?: boolean;
  children: ReactNode;
}

function Tool({ label, width, pressed, menu, children }: ToolProps) {
  return (
    <button
      aria-label={label}
      className={clsx(
        'flex h-6 shrink-0 items-center justify-center gap-1 whitespace-nowrap',
        width,
        pressed && 'border border-b-white border-l-[#a0a0a0] border-r-white border-t-[#a0a0a0] bg-[#f8f8f8]'
      )}
    >
      {children}
      {menu && (
        <svg width="6" height="4" viewBox="0 0 6 4" className="shrink-0">
          <path d="M0 0h6L3 3.500z" fill="#000" />
        </svg>
      )}
    </button>
  );
}

function Separator({ width }: { width: string }) {
  return (
    <div className={clsx('flex h-6 shrink-0 justify-center py-px', width)}>
      <div className="w-px bg-[#9a9a9a]" />
    </div>
  );
}

function Grip() {
  return <div className="my-[2px] mr-[3px] w-[3px] shrink-0 bg-[repeating-linear-gradient(to_bottom,#a0a0a0_0_1px,#f0f0f0_1px_2px)]" />;
}

const PLUS = <path d="M10.500 6.500h4v3.500h3.500v4h-3.500v3.500h-4v-3.500h-3.500v-4h3.500z" fill="#2fd42f" stroke="#0a8a14" />;
const AXES = <path d="M4.500 2v14M2 13.500h14M3 4l1.500-2L6 4M14.500 12l1.500 1.500-1.500 1.500" />;

function Magnifier({ plus }: { plus?: boolean }) {
  return (
    <Icon>
      <path d="M11 11l5 5" stroke="#b8860b" strokeWidth="3.500" />
      <path d="M11 11l5 5" stroke="#ffd75e" strokeWidth="1.500" />
      <circle cx="7" cy="7" r="5.500" fill="#d6eefc" stroke="#3f8fd0" strokeWidth="1.500" />
      <path d={plus ? 'M4 7h6M7 4v6' : 'M4 7h6'} stroke="#2a62a8" strokeWidth="2" />
    </Icon>
  );
}

const TIMEFRAMES: [string, string][] = [
  ['M1', 'w-[30px]'],
  ['M5', 'w-[26px]'],
  ['M15', 'w-[29px]'],
  ['M30', 'w-[27px]'],
  ['H1', 'w-7'],
  ['H4', 'w-7'],
  ['D1', 'w-7'],
  ['W1', 'w-[29px]'],
  ['MN', 'w-[30px]'],
];

function Toolbar() {
  return (
    <nav className={clsx('flex h-[26px] shrink-0 overflow-hidden border-b-2 border-[#7c7c7c] bg-[#f0f0f0]', UI_FONT)}>
      <div className="my-[2px] w-1 shrink-0 bg-[repeating-linear-gradient(to_bottom,#a0a0a0_0_1px,#f0f0f0_1px_2px)]" />
      <Tool label="New chart" width="w-[38px]" menu>
        <Icon>
          <rect x="0.500" y="2.500" width="12" height="9" fill="#e6f1ff" stroke="#2e6fc0" />
          <path d="M3.500 4.500v5M2 6h3M2 8.500h6" stroke="#6b8fc0" />
          {PLUS}
        </Icon>
      </Tool>
      <Tool label="Profiles" width="w-[37px]" menu>
        <Icon>
          <rect x="5.500" y="6.500" width="12" height="9" fill="#b8d6fa" stroke="#2e6fc0" />
          <rect x="3.500" y="4.500" width="12" height="9" fill="#cfe3fb" stroke="#2e6fc0" />
          <rect x="1.500" y="1.500" width="12" height="9" fill="#f0f7ff" stroke="#2e6fc0" />
          <path d="M4 4h7M4 8h7M5.500 3v3M9.500 6v3" stroke="#6b8fc0" />
        </Icon>
      </Tool>
      <Separator width="w-[5px]" />
      <Tool label="Market watch" width="w-7">
        <Icon>
          <rect x="1.500" y="1.500" width="15" height="15" fill="#fff" stroke="#5a9be0" />
          <path d="M4 4h1M4 13h1M12 4h2" stroke="#c0d4f0" />
          <path d="M7 4l3 3H8.500v2h-3V7H4z" fill="#20c020" stroke="#0b8a0b" />
          <path d="M12 15l-3-3h1.500v-2.500h2.500V12h2z" fill="#ff6a3c" stroke="#d03010" />
        </Icon>
      </Tool>
      <Tool label="Data window" width="w-[29px]">
        <Icon>
          <circle cx="9" cy="9" r="5" strokeWidth="1.500" />
          <path d="M9 1v6M9 11v6M1 9h6M11 9h6" strokeWidth="1.500" />
        </Icon>
      </Tool>
      <Tool label="Navigator" width="w-[27px]">
        <Icon>
          <path d="M1.500 3.500l1.500-2h4l1 2h4v6h-10.500z" fill="#ffe38a" stroke="#c8962a" />
          <path d="M2.500 11v4.500H8" stroke="#333" strokeDasharray="1 1" />
          <path d="M12 6.500l1.700 3.400 3.800.5-2.800 2.600.7 3.800-3.400-1.800-3.400 1.800.7-3.800-2.800-2.600 3.800-.5z" fill="#ffd84a" stroke="#b8860b" />
        </Icon>
      </Tool>
      <Tool label="Terminal" width="w-7">
        <Icon>
          <rect x="1.500" y="2.500" width="15" height="13" fill="#fff" stroke="#2e75c8" strokeWidth="1.500" />
          <path d="M4 3v12" stroke="#222" strokeWidth="2" strokeDasharray="1.500 1" />
          <path d="M7 5.500h8M7 7.500h8M7 9.500h8M7 11.500h8" stroke="#cfdcf0" />
        </Icon>
      </Tool>
      <Tool label="Strategy tester" width="w-[29px]">
        <Icon>
          <rect x="1.500" y="1.500" width="12" height="13" fill="#eef4fb" stroke="#8aa8cc" strokeDasharray="2 1" />
          <path d="M4 4v5M7 3v4M11 4v3" stroke="#999" />
          <path d="M13 13l4 4" stroke="#d09a20" strokeWidth="2.500" />
          <circle cx="9.500" cy="9" r="4.500" fill="#cfe8fb" stroke="#5b93c8" />
        </Icon>
      </Tool>
      <Separator width="w-[5px]" />
      <Tool label="Новый Ордер" width="w-[106px]">
        <Icon>
          <path d="M1.500 1.500h7l3 3v10h-10z" fill="#fff" stroke="#555" />
          <path d="M3 5.500h5M3 8.500h5M3 11.500h4M3 3.500h3" />
          {PLUS}
        </Icon>
        <span className="text-[11px] text-black">Новый Ордер</span>
      </Tool>
      <Tool label="Auto trading alert" width="w-7">
        <Icon>
          <path d="M9 1.500L16.500 9 9 16.500 1.500 9z" fill="#ffd84a" stroke="#b8860b" strokeLinejoin="round" />
          <path d="M9 5v5M9 11.500v2" stroke="#6b4a00" strokeWidth="2" />
        </Icon>
      </Tool>
      <div className="w-[2px] shrink-0" />
      <Tool label="Советники" width="w-[89px]" pressed>
        <Icon>
          <path d="M3 7c2 5 4 8 7 9 3-2 5-5 5-9z" fill="#f5c842" stroke="#b8860b" />
          <path d="M1 5c1 4 13 5 16 1l-3-1c0-3-2-4-5-4S5 3 5 5z" fill="#5fb0e0" stroke="#2f7fb8" />
          <circle cx="13" cy="13" r="4" fill="#1fae2f" stroke="#fff" />
          <path d="M12 11l3 2-3 2z" fill="#fff" stroke="none" />
        </Icon>
        <span className="text-[11px] text-black">Советники</span>
      </Tool>
      <Separator width="w-[7px]" />
      <Grip />
      <Tool label="Bar chart" width="w-[30px]">
        <Icon>
          {AXES}
          <path d="M9.500 4v8M7 10.500h2.500M9.500 5.500H12" stroke="#0a8a14" strokeWidth="1.500" />
        </Icon>
      </Tool>
      <Tool label="Candlesticks" width="w-[25px]" pressed>
        <Icon>
          {AXES}
          <path d="M10.500 1v11" stroke="#0a8a14" />
          <rect x="8.500" y="3.500" width="4" height="6" fill="#2fd42f" stroke="#0a8a14" />
        </Icon>
      </Tool>
      <Tool label="Line chart" width="w-[30px]">
        <Icon>
          {AXES}
          <path d="M3 11c2-1 3-5 6-5s4 3 6 4" stroke="#3aa040" />
        </Icon>
      </Tool>
      <Separator width="w-[5px]" />
      <Tool label="Zoom in" width="w-7">
        <Magnifier plus />
      </Tool>
      <Tool label="Zoom out" width="w-7">
        <Magnifier />
      </Tool>
      <Separator width="w-[6px]" />
      <Tool label="Auto scroll" width="w-[30px]">
        <Icon>
          {AXES}
          <path d="M9.500 4.500l4 3.500-4 3.500z" fill="#4fc850" stroke="#0a8a14" />
        </Icon>
      </Tool>
      <Tool label="Chart shift" width="w-[26px]" pressed>
        <Icon>
          {AXES}
          <path d="M10.500 2v10" stroke="#2e6fc0" strokeWidth="1.500" />
          <path d="M17 7.500h-4M15 5.500l-2 2 2 2" stroke="#c03a10" strokeWidth="1.500" />
        </Icon>
      </Tool>
      <Separator width="w-2" />
      <Tool label="Indicators" width="w-[35px]" menu>
        <Icon>
          <path d="M1.500 1.500h8l2 2v11h-10z" fill="#fff" stroke="#555" />
          <path d="M7.500 3.500c-2-.5-2 1-2 3v5M3.500 7h4" strokeWidth="1.500" />
          {PLUS}
        </Icon>
      </Tool>
      <Tool label="Periods" width="w-[38px]" menu>
        <Icon>
          <circle cx="9" cy="9" r="7" fill="#e8f3ff" stroke="#1c5fb8" strokeWidth="2.500" />
          <path d="M9 5v4h3" stroke="#333" />
          <path d="M9 3.500v1M9 13.500v1M3.500 9h1M13.500 9h1" stroke="#777" />
        </Icon>
      </Tool>
      <Tool label="Templates" width="w-[37px]" menu>
        <Icon>
          <rect x="1.500" y="2.500" width="15" height="13" fill="#fff" stroke="#2e75c8" />
          <path d="M2 3.500h14" stroke="#5a9be0" strokeWidth="2" />
          <path d="M3 8.500l3-1 3 1 3-2 3 1" stroke="#b03020" />
          <path d="M3 12.500l3-1 2 2 4-2 3 1.500" stroke="#20a030" />
        </Icon>
      </Tool>
      <Separator width="w-1" />
      <Grip />
      <Tool label="Cursor" width="w-[27px]" pressed>
        <Icon>
          <path d="M5.500 2v11.500l3-2.500 2 4.500 2-1-2-4.500h4z" fill="#505050" />
        </Icon>
      </Tool>
      <Tool label="Crosshair" width="w-[29px]">
        <Icon>
          <path d="M8.500 1v6M8.500 10v6M1 8.500h6M10 8.500h6" />
        </Icon>
      </Tool>
      <Separator width="w-1" />
      <Tool label="Vertical line" width="w-[29px]">
        <Icon>
          <path d="M9.500 3v12" />
        </Icon>
      </Tool>
      <Tool label="Horizontal line" width="w-[29px]">
        <Icon>
          <path d="M3 9.500h12" />
        </Icon>
      </Tool>
      <Tool label="Trend line" width="w-[26px]">
        <Icon>
          <path d="M3 15L15 3" />
        </Icon>
      </Tool>
      <Tool label="Equidistant channel" width="w-[30px]">
        <Icon>
          <path d="M1 10l12-8M1 14L14 5M4 6l-1 8M7 4l-1 8M10 3L9 10M13 1l-1 7" strokeWidth="1.250" />
          <path d="M16 10.500h-3.500v6H16M12.500 13.500h3" />
        </Icon>
      </Tool>
      <Tool label="Fibonacci retracement" width="w-[26px]">
        <Icon>
          <path d="M1 2.500h14M1 6.500h14M1 10.500h9M1 13.500h9" strokeDasharray="1 1" />
          <path d="M16 10.500h-3.500v6.500M12.500 13.500h3" />
        </Icon>
      </Tool>
      <Tool label="Text" width="w-[29px]">
        <span className={clsx('text-xs font-bold text-[#606060]', ARIAL)}>A</span>
      </Tool>
      <Tool label="Text label" width="w-7">
        <span className={clsx('border border-dotted border-[#606060] px-[2px] text-[11px] font-bold leading-[11px] text-[#606060]', ARIAL)}>T</span>
      </Tool>
      <Tool label="Arrows" width="w-9" menu>
        <Icon size={16}>
          <path d="M5.500 1L10 5H7.500v2h-4V5H1zM13 17l-4.500-4H11v-2h4v2h2.500z" fill="#505050" stroke="none" />
          <path d="M2 10l3 3 6-6.500" strokeWidth="1.500" />
        </Icon>
      </Tool>
      <Separator width="w-1" />
      <Grip />
      {TIMEFRAMES.map(([name, width]) => (
        <Tool key={name} label={name} width={width} pressed={name === 'M5'}>
          <span className="text-[10px] text-[#404040]">{name}</span>
        </Tool>
      ))}
    </nav>
  );
}

export default function App() {
  return (
    <div className="flex min-h-screen flex-col overflow-hidden bg-[#808080]">
      <Toolbar />
      <main className="flex flex-1 overflow-hidden">
        <ChartM1 />
        <ChartM5 />
      </main>
    </div>
  );
}
